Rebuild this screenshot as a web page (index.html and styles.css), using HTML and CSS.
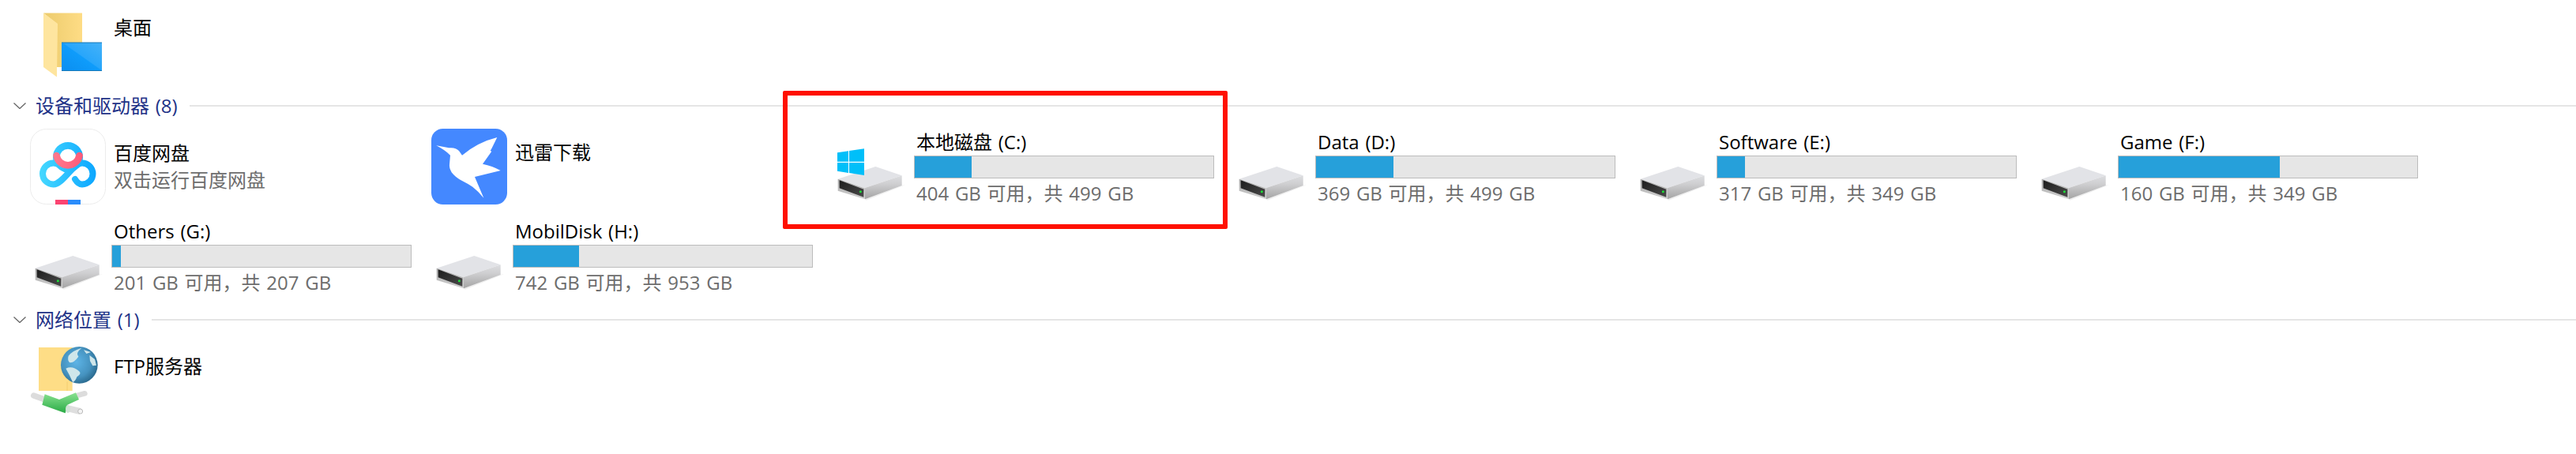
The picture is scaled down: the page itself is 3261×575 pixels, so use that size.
FILE: index.html
```html
<!DOCTYPE html>
<html lang="zh-CN">
<head>
<meta charset="utf-8">
<title>此电脑</title>
<link rel="stylesheet" href="styles.css">
</head>
<body>
<main class="page">
  <div class="tile tile-top">
    <svg class="icon icon-top" viewBox="38 16 96 96">
      <defs>
        <linearGradient id="fback" x1="0" y1="0" x2="1" y2="0"><stop offset="0" stop-color="#eccb6c"/><stop offset="1" stop-color="#fedc85"/></linearGradient>
        <linearGradient id="fblue" x1="0" y1="1" x2="1" y2="0"><stop offset="0" stop-color="#0a8ef0"/><stop offset=".5" stop-color="#0f9cfb"/><stop offset=".52" stop-color="#28a6fb"/><stop offset="1" stop-color="#45b2f8"/></linearGradient>
      </defs>
      <path d="M55 16.500H104V85H72V30Z" fill="url(#fback)"/>
      <path d="M55 16.500L73 30 72 97.500 55 85Z" fill="#fee59f"/>
      <path d="M72 85H104V91H72Z" fill="#fff"/>
      <rect x="78" y="54" width="51" height="36" fill="url(#fblue)"/>
      <path d="M78 54H129M78 89.500H129" stroke="#1779b8" stroke-width="1"/>
    </svg>
    <div class="tile-plain"><div class="name">桌面</div></div>
  </div>

  <div class="heading">
    <svg class="chevron" viewBox="0 0 16 8"><path d="M.5 .5L8 7.500 15.500 .5" fill="none" stroke="#666" stroke-width="1.300"/></svg>
    <span class="heading-text">设备和驱动器 (8)</span>
    <span class="heading-line"></span>
  </div>

  <div class="tiles">
    <div class="tile">
      <svg class="icon" viewBox="38 163 96 96">
        <defs>
          <linearGradient id="bd" gradientUnits="userSpaceOnUse" x1="50" y1="0" x2="122" y2="0"><stop offset="0" stop-color="#45d8ff"/><stop offset="1" stop-color="#0ca6ff"/></linearGradient>
          <linearGradient id="bdp" gradientUnits="userSpaceOnUse" x1="67" y1="0" x2="105" y2="0"><stop offset="0" stop-color="#ff7a8e"/><stop offset="1" stop-color="#fe5a78"/></linearGradient>
        </defs>
        <rect x="38.500" y="163.500" width="95" height="95" rx="20" fill="#fff" stroke="#ececec"/>
        <path d="M95 227Q99 233.500 104 233.500A13.500 13.500 0 0 0 104 206.500C92 206.500 80 233.500 67.500 233.500A13.500 13.500 0 0 1 67.500 206.500C74 206.500 78 210 82 214" fill="none" stroke="url(#bd)" stroke-width="8" stroke-linecap="round"/>
        <circle cx="86" cy="199" r="14.700" fill="none" stroke="url(#bd)" stroke-width="8.700"/>
        <path d="M71.500 197A14.700 14.700 0 0 0 100.500 197" fill="none" stroke="url(#bdp)" stroke-width="8.700" stroke-linecap="round"/>
        <rect x="70" y="253" width="16" height="6" fill="#fb4471"/>
        <rect x="86" y="253" width="16" height="6" fill="#2a8cfb"/>
      </svg>
      <div class="tile-plain">
        <div class="name">百度网盘</div>
        <div class="status">双击运行百度网盘</div>
      </div>
    </div>

    <div class="tile">
      <svg class="icon" viewBox="33 24 288 288">
        <rect x="33" y="24" width="288" height="288" rx="44" fill="#4488ff"/>
        <path d="M52 88L100 97Q125 94 138 108L150 125Q210 75 283 57L262 100 257 108 262 110 228 158Q265 165 296 183L198 207 232 287Q212 262 190 245 170 232 150 222 125 210 110 190 100 172 102 160L105 125Q85 105 52 88Z" fill="#fff"/>
      </svg>
      <div class="tile-plain"><div class="name name-tight">迅雷下载</div></div>
    </div>

    <div class="tile">
      <svg class="icon" viewBox="42 -36 288 288">
        <defs>
          <linearGradient id="dside" x1="0" y1="0" x2="0" y2="1"><stop offset="0" stop-color="#dcdde0"/><stop offset=".35" stop-color="#cfcfd1"/><stop offset="1" stop-color="#a4a4a4"/></linearGradient>
          <linearGradient id="dfront" x1="0" y1="0" x2="0" y2="1"><stop offset="0" stop-color="#a8a8a8"/><stop offset="1" stop-color="#d0d0d0"/></linearGradient>
          <linearGradient id="dpanel" x1="0" y1="0" x2="1" y2="1"><stop offset="0" stop-color="#1d1d1d"/><stop offset="1" stop-color="#4a4a4a"/></linearGradient>
          <symbol id="drive" viewBox="42 -36 288 288">
            <path d="M165 232L305 180 320 176 170 236Z" fill="#efefef"/>
            <path d="M62 155L205 108 305 142 163 190Z" fill="#e2e3e7"/>
            <path d="M163 190L305 142V180L165 232Z" fill="url(#dside)"/>
            <path d="M62 155L163 190 165 232 62 200Z" fill="url(#dfront)"/>
            <path d="M68 160L160 194V224L68 190Z" fill="url(#dpanel)"/>
            <circle cx="148" cy="203" r="4.500" fill="#1be338"/>
          </symbol>
        </defs>
        <use href="#drive" x="42" y="-36" width="288" height="288"/>
        <path d="M60 55L102 49V89H60ZM105 48L162 40V89H105ZM60 93H102V132L60 125ZM105 93H162V141L105 132Z" fill="#00bff9"/>
      </svg>
      <div class="tile-disk">
        <div class="name">本地磁盘 (C:)</div>
        <div class="bar"><div class="fill" style="width:19%"></div></div>
        <div class="status">404 GB 可用，共 499 GB</div>
      </div>
    </div>

    <div class="tile">
      <svg class="icon" viewBox="42 -36 288 288"><use href="#drive" x="42" y="-36" width="288" height="288"/></svg>
      <div class="tile-disk">
        <div class="name">Data (D:)</div>
        <div class="bar"><div class="fill" style="width:26%"></div></div>
        <div class="status">369 GB 可用，共 499 GB</div>
      </div>
    </div>

    <div class="tile">
      <svg class="icon" viewBox="42 -36 288 288"><use href="#drive" x="42" y="-36" width="288" height="288"/></svg>
      <div class="tile-disk">
        <div class="name">Software (E:)</div>
        <div class="bar"><div class="fill" style="width:9.200%"></div></div>
        <div class="status">317 GB 可用，共 349 GB</div>
      </div>
    </div>

    <div class="tile">
      <svg class="icon" viewBox="42 -36 288 288"><use href="#drive" x="42" y="-36" width="288" height="288"/></svg>
      <div class="tile-disk">
        <div class="name">Game (F:)</div>
        <div class="bar"><div class="fill" style="width:54%"></div></div>
        <div class="status">160 GB 可用，共 349 GB</div>
      </div>
    </div>

    <div class="tile">
      <svg class="icon" viewBox="42 -36 288 288"><use href="#drive" x="42" y="-36" width="288" height="288"/></svg>
      <div class="tile-disk">
        <div class="name">Others (G:)</div>
        <div class="bar"><div class="fill" style="width:3%"></div></div>
        <div class="status">201 GB 可用，共 207 GB</div>
      </div>
    </div>

    <div class="tile">
      <svg class="icon" viewBox="42 -36 288 288"><use href="#drive" x="42" y="-36" width="288" height="288"/></svg>
      <div class="tile-disk">
        <div class="name">MobilDisk (H:)</div>
        <div class="bar"><div class="fill" style="width:22%"></div></div>
        <div class="status">742 GB 可用，共 953 GB</div>
      </div>
    </div>
  </div>

  <div class="heading heading-net">
    <svg class="chevron" viewBox="0 0 16 8"><path d="M.5 .5L8 7.500 15.500 .5" fill="none" stroke="#666" stroke-width="1.300"/></svg>
    <span class="heading-text">网络位置 (1)</span>
    <span class="heading-line"></span>
  </div>

  <div class="tile">
    <svg class="icon" viewBox="54 39 288 288">
      <defs>
        <radialGradient id="globe" cx=".42" cy=".42" r=".62"><stop offset="0" stop-color="#5db4e6"/><stop offset=".65" stop-color="#4592bf"/><stop offset="1" stop-color="#29688c"/></radialGradient>
        <linearGradient id="pipe" gradientUnits="userSpaceOnUse" x1="0" y1="235" x2="0" y2="305"><stop offset="0" stop-color="#86e08e"/><stop offset="1" stop-color="#2fae4a"/></linearGradient>
      </defs>
      <rect x="87" y="60" width="128" height="165" fill="#fedd86"/>
      <path d="M195 190V225" stroke="#eec565" stroke-width="2"/>
      <circle cx="241" cy="127" r="70" fill="url(#globe)"/>
      <path d="M200 92Q215 72 250 62 225 82 238 95 222 118 205 118 195 108 200 92ZM190 140Q215 128 240 150 252 160 232 172 226 190 216 192 205 165 190 140ZM280 90L300 105 306 128 292 130 282 112ZM258 70L285 78 268 84Z" fill="#cfe6ea"/>
      <path d="M68 243L110 258" stroke="#dcdcdc" stroke-width="22" stroke-linecap="round"/>
      <path d="M235 242L262 235" stroke="#dcdcdc" stroke-width="20" stroke-linecap="round"/>
      <path d="M190 290L245 303" stroke="#dedede" stroke-width="24"/>
      <path d="M110 238L165 258 228 232 240 258 196 278 188 310 100 278Z" fill="url(#pipe)"/>
      <ellipse cx="198" cy="294" rx="9" ry="15" fill="#cfe3d6"/>
      <circle cx="245" cy="303" r="9" fill="#f4f4f4" stroke="#bbb" stroke-width="3"/>
    </svg>
    <div class="tile-plain"><div class="name">FTP服务器</div></div>
  </div>

  <div class="marker"></div>
</main>
</body>
</html>
```

FILE: styles.css
```css
* {
  box-sizing: border-box;
}

html,
body {
  margin: 0;
  background: #fff;
}

.page {
  position: relative;
  height: 575px;
  overflow: hidden;
  font-family: "Open Sans", "Noto Sans CJK SC", sans-serif;
  font-size: 24px;
  line-height: 34px;
  word-spacing: 1.500px;
  color: #000;
}

.tiles {
  display: grid;
  grid-template-columns: repeat(6, 508px);
  grid-auto-rows: 112px;
  row-gap: 1px;
  justify-content: start;
}

.tile {
  display: flex;
  align-items: flex-start;
  width: 508px;
}

.tile-top {
  height: 113px;
}

.icon {
  flex: none;
  width: 96px;
  height: 96px;
  margin: 4px 7px 0 38px;
}

.icon-top {
  margin-top: 16px;
}

.tile-plain {
  padding-top: 18px;
}

.tile-disk {
  flex: none;
  width: 380px;
  padding-top: 4px;
}

.name,
.status {
  padding-left: 3px;
  white-space: nowrap;
}

.name-tight {
  margin-top: -1px;
}

.status {
  color: #6d6d6d;
}

.bar {
  height: 29px;
  margin-bottom: 2px;
  border: 1px solid #bcbcbc;
  background: #e6e6e6;
}

.fill {
  height: 100%;
  background: #26a0da;
}

.heading {
  display: flex;
  align-items: center;
  height: 42px;
  margin-bottom: 4px;
  padding-left: 17px;
}

.heading-net {
  margin-bottom: 3px;
}

.chevron {
  flex: none;
  width: 16px;
  height: 8px;
  margin-right: 12px;
}

.heading-text {
  color: #1e3287;
  white-space: nowrap;
}

.heading-line {
  flex: 1;
  height: 2px;
  margin-left: 15px;
  background: #e5e5e5;
}

.marker {
  position: absolute;
  left: 991px;
  top: 115px;
  width: 563px;
  height: 175px;
  border: 6px solid #ff1000;
  border-radius: 2px;
}
```
